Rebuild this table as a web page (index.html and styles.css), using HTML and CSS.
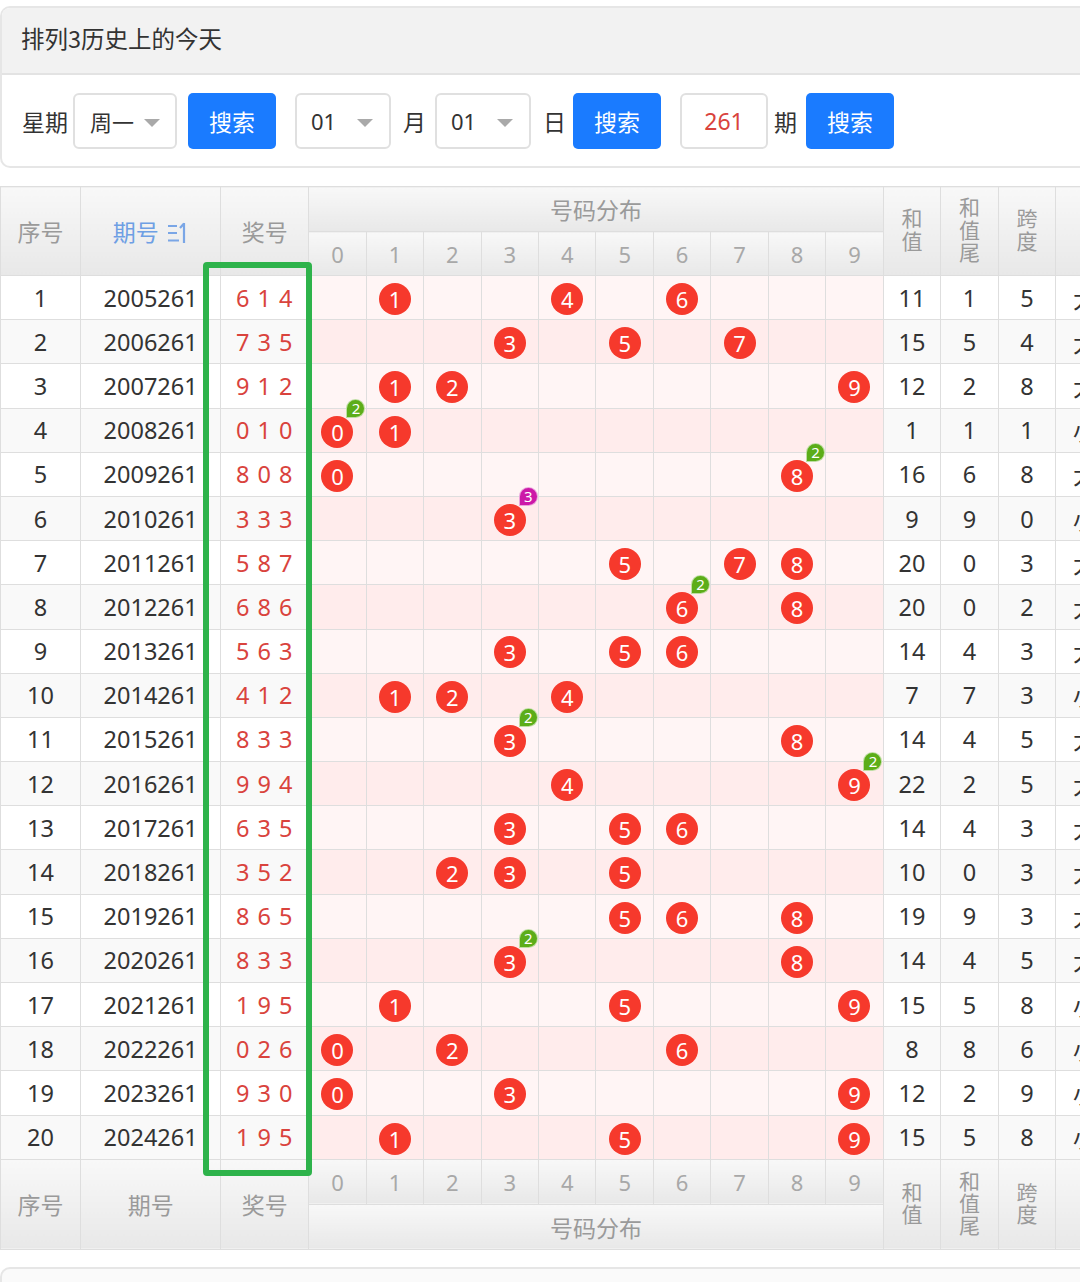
FILE: index.html
```html
<!DOCTYPE html>
<html lang="zh">
<head>
<meta charset="utf-8">
<title>排列3历史上的今天</title>
<link rel="stylesheet" href="styles.css">
</head>
<body>
<div class="page">
  <div class="card">
    <div class="card-head">排列3历史上的今天</div>
    <div class="card-body">
      <span class="lbl">星期</span>
      <div class="sel sel-wk">周一<i class="caret"></i></div>
      <button class="btn b1">搜索</button>
      <div class="sel sel-d s2">01<i class="caret"></i></div>
      <span class="lbl l-m">月</span>
      <div class="sel sel-d">01<i class="caret"></i></div>
      <span class="lbl l-d">日</span>
      <button class="btn b2">搜索</button>
      <div class="inp">261</div>
      <span class="lbl l-q">期</span>
      <button class="btn b3">搜索</button>
    </div>
  </div>

  <table class="grid">
    <colgroup>
      <col class="c-seq"><col class="c-iss"><col class="c-win">
      <col class="c-d"><col class="c-d"><col class="c-d"><col class="c-d"><col class="c-d">
      <col class="c-d"><col class="c-d"><col class="c-d"><col class="c-d"><col class="c-d">
      <col class="c-s"><col class="c-s"><col class="c-s"><col class="c-s">
    </colgroup>
    <thead>
      <tr class="h1">
        <th rowspan="2">序号</th>
        <th rowspan="2" class="sort">期号 <svg class="sort-ic" viewBox="0 0 22 24" width="22" height="24"><path d="M1 5H10M1 12H10M1 19.5H12M17 2V22M17 2.5L13 7" fill="none" stroke="#7aa6e6" stroke-width="2.2"/></svg></th>
        <th rowspan="2">奖号</th>
        <th colspan="10">号码分布</th>
        <th rowspan="2"><span class="vt">和值</span></th>
        <th rowspan="2"><span class="vt">和值尾</span></th>
        <th rowspan="2"><span class="vt">跨度</span></th>
        <th rowspan="2"></th>
      </tr>
      <tr class="h2">
        <th>0</th><th>1</th><th>2</th><th>3</th><th>4</th><th>5</th><th>6</th><th>7</th><th>8</th><th>9</th>
      </tr>
    </thead>
    <tbody>
      <tr><td>1</td><td>2005261</td><td class="win">6 1 4</td><td></td><td><i class="ball">1</i></td><td></td><td></td><td><i class="ball">4</i></td><td></td><td><i class="ball">6</i></td><td></td><td></td><td></td><td>11</td><td>1</td><td>5</td><td>大</td></tr>
      <tr><td>2</td><td>2006261</td><td class="win">7 3 5</td><td></td><td></td><td></td><td><i class="ball">3</i></td><td></td><td><i class="ball">5</i></td><td></td><td><i class="ball">7</i></td><td></td><td></td><td>15</td><td>5</td><td>4</td><td>大</td></tr>
      <tr><td>3</td><td>2007261</td><td class="win">9 1 2</td><td></td><td><i class="ball">1</i></td><td><i class="ball">2</i></td><td></td><td></td><td></td><td></td><td></td><td></td><td><i class="ball">9</i></td><td>12</td><td>2</td><td>8</td><td>大</td></tr>
      <tr><td>4</td><td>2008261</td><td class="win">0 1 0</td><td><i class="ball">0<b class="rep">2</b></i></td><td><i class="ball">1</i></td><td></td><td></td><td></td><td></td><td></td><td></td><td></td><td></td><td>1</td><td>1</td><td>1</td><td>小</td></tr>
      <tr><td>5</td><td>2009261</td><td class="win">8 0 8</td><td><i class="ball">0</i></td><td></td><td></td><td></td><td></td><td></td><td></td><td></td><td><i class="ball">8<b class="rep">2</b></i></td><td></td><td>16</td><td>6</td><td>8</td><td>大</td></tr>
      <tr><td>6</td><td>2010261</td><td class="win">3 3 3</td><td></td><td></td><td></td><td><i class="ball">3<b class="rep r3">3</b></i></td><td></td><td></td><td></td><td></td><td></td><td></td><td>9</td><td>9</td><td>0</td><td>小</td></tr>
      <tr><td>7</td><td>2011261</td><td class="win">5 8 7</td><td></td><td></td><td></td><td></td><td></td><td><i class="ball">5</i></td><td></td><td><i class="ball">7</i></td><td><i class="ball">8</i></td><td></td><td>20</td><td>0</td><td>3</td><td>大</td></tr>
      <tr><td>8</td><td>2012261</td><td class="win">6 8 6</td><td></td><td></td><td></td><td></td><td></td><td></td><td><i class="ball">6<b class="rep">2</b></i></td><td></td><td><i class="ball">8</i></td><td></td><td>20</td><td>0</td><td>2</td><td>大</td></tr>
      <tr><td>9</td><td>2013261</td><td class="win">5 6 3</td><td></td><td></td><td></td><td><i class="ball">3</i></td><td></td><td><i class="ball">5</i></td><td><i class="ball">6</i></td><td></td><td></td><td></td><td>14</td><td>4</td><td>3</td><td>大</td></tr>
      <tr><td>10</td><td>2014261</td><td class="win">4 1 2</td><td></td><td><i class="ball">1</i></td><td><i class="ball">2</i></td><td></td><td><i class="ball">4</i></td><td></td><td></td><td></td><td></td><td></td><td>7</td><td>7</td><td>3</td><td>小</td></tr>
      <tr><td>11</td><td>2015261</td><td class="win">8 3 3</td><td></td><td></td><td></td><td><i class="ball">3<b class="rep">2</b></i></td><td></td><td></td><td></td><td></td><td><i class="ball">8</i></td><td></td><td>14</td><td>4</td><td>5</td><td>大</td></tr>
      <tr><td>12</td><td>2016261</td><td class="win">9 9 4</td><td></td><td></td><td></td><td></td><td><i class="ball">4</i></td><td></td><td></td><td></td><td></td><td><i class="ball">9<b class="rep">2</b></i></td><td>22</td><td>2</td><td>5</td><td>大</td></tr>
      <tr><td>13</td><td>2017261</td><td class="win">6 3 5</td><td></td><td></td><td></td><td><i class="ball">3</i></td><td></td><td><i class="ball">5</i></td><td><i class="ball">6</i></td><td></td><td></td><td></td><td>14</td><td>4</td><td>3</td><td>大</td></tr>
      <tr><td>14</td><td>2018261</td><td class="win">3 5 2</td><td></td><td></td><td><i class="ball">2</i></td><td><i class="ball">3</i></td><td></td><td><i class="ball">5</i></td><td></td><td></td><td></td><td></td><td>10</td><td>0</td><td>3</td><td>大</td></tr>
      <tr><td>15</td><td>2019261</td><td class="win">8 6 5</td><td></td><td></td><td></td><td></td><td></td><td><i class="ball">5</i></td><td><i class="ball">6</i></td><td></td><td><i class="ball">8</i></td><td></td><td>19</td><td>9</td><td>3</td><td>大</td></tr>
      <tr><td>16</td><td>2020261</td><td class="win">8 3 3</td><td></td><td></td><td></td><td><i class="ball">3<b class="rep">2</b></i></td><td></td><td></td><td></td><td></td><td><i class="ball">8</i></td><td></td><td>14</td><td>4</td><td>5</td><td>大</td></tr>
      <tr><td>17</td><td>2021261</td><td class="win">1 9 5</td><td></td><td><i class="ball">1</i></td><td></td><td></td><td></td><td><i class="ball">5</i></td><td></td><td></td><td></td><td><i class="ball">9</i></td><td>15</td><td>5</td><td>8</td><td>小</td></tr>
      <tr><td>18</td><td>2022261</td><td class="win">0 2 6</td><td><i class="ball">0</i></td><td></td><td><i class="ball">2</i></td><td></td><td></td><td></td><td><i class="ball">6</i></td><td></td><td></td><td></td><td>8</td><td>8</td><td>6</td><td>小</td></tr>
      <tr><td>19</td><td>2023261</td><td class="win">9 3 0</td><td><i class="ball">0</i></td><td></td><td></td><td><i class="ball">3</i></td><td></td><td></td><td></td><td></td><td></td><td><i class="ball">9</i></td><td>12</td><td>2</td><td>9</td><td>小</td></tr>
      <tr><td>20</td><td>2024261</td><td class="win">1 9 5</td><td></td><td><i class="ball">1</i></td><td></td><td></td><td></td><td><i class="ball">5</i></td><td></td><td></td><td></td><td><i class="ball">9</i></td><td>15</td><td>5</td><td>8</td><td>小</td></tr>
    </tbody>
    <tfoot>
      <tr class="f1">
        <th rowspan="2">序号</th>
        <th rowspan="2">期号</th>
        <th rowspan="2">奖号</th>
        <th>0</th><th>1</th><th>2</th><th>3</th><th>4</th><th>5</th><th>6</th><th>7</th><th>8</th><th>9</th>
        <th rowspan="2"><span class="vt">和值</span></th>
        <th rowspan="2"><span class="vt">和值尾</span></th>
        <th rowspan="2"><span class="vt">跨度</span></th>
        <th rowspan="2"></th>
      </tr>
      <tr class="f2">
        <th colspan="10">号码分布</th>
      </tr>
    </tfoot>
  </table>

  <div class="next-card"></div>

  <div class="frame"></div>
</div>
</body>
</html>
```

FILE: styles.css
```css
html, body {
  margin: 0;
  padding: 0;
  overflow: hidden;
  background: #fff;
}
body {
  font-family: "Noto Sans", "Noto Sans CJK SC", sans-serif;
  color: #333;
}
.page {
  position: relative;
  width: 1120px;
  padding-top: 6px;
}

/* top card */
.card {
  border: 2px solid #e6e6e6;
  border-right: none;
  border-radius: 10px 0 0 10px;
  overflow: hidden;
}
.card-head {
  box-sizing: border-box;
  height: 67px;
  padding: 0 0 5px 19px;
  background: #f2f2f2;
  border-bottom: 2px solid #e3e3e3;
  display: flex;
  align-items: center;
  font-family: "Noto Sans CJK SC", sans-serif;
  font-size: 23.5px;
  color: #333;
}
.card-body {
  display: flex;
  align-items: center;
  padding: 18px 0 17px 20px;
}
.lbl {
  font-family: "Noto Sans CJK SC", sans-serif;
  font-size: 23px;
  color: #333;
}
.sel {
  position: relative;
  box-sizing: border-box;
  height: 56px;
  border: 2px solid #e0e0e0;
  border-radius: 6px;
  display: flex;
  align-items: center;
  font-family: "Noto Sans", "Noto Sans CJK SC", sans-serif;
  font-size: 22px;
  color: #333;
  background: #fff;
}
.sel-wk {
  width: 104px;
  margin-left: 5px;
  padding-left: 15px;
}
.sel-d {
  width: 96px;
  padding-left: 14px;
}
.s2 { margin-left: 19px; }
.caret {
  position: absolute;
  right: 15px;
  top: 24px;
  width: 0;
  height: 0;
  border-left: 8px solid transparent;
  border-right: 8px solid transparent;
  border-top: 8px solid #a9a9a9;
}
.sel-d .caret { right: 16px; }
.btn {
  box-sizing: border-box;
  height: 56px;
  width: 88px;
  border: none;
  border-radius: 5px;
  background: #1a7bff;
  color: #fff;
  font-family: "Noto Sans CJK SC", sans-serif;
  font-size: 23px;
  padding: 0;
}
.b1 { margin-left: 11px; }
.l-m { margin-left: 12px; margin-right: 9px; }
.l-d { margin-left: 12px; margin-right: 7px; }
.inp {
  box-sizing: border-box;
  width: 88px;
  height: 56px;
  margin-left: 19px;
  border: 2px solid #e0e0e0;
  border-radius: 6px;
  display: flex;
  align-items: center;
  justify-content: center;
  color: #d9433d;
  font-size: 23px;
}
.l-q { margin-left: 6px; margin-right: 9px; }

/* table */
.grid {
  margin-top: 18px;
  border-collapse: collapse;
  table-layout: fixed;
  width: 1114px;
}
.c-seq { width: 80px; }
.c-iss { width: 140px; }
.c-win { width: 88px; }
.c-d { width: 57.4px; }
.c-s { width: 57.5px; }
.grid th, .grid td {
  border: 1px solid #dedede;
  padding: 0;
  text-align: center;
  vertical-align: middle;
  white-space: nowrap;
}
.grid th {
  background: linear-gradient(#f8f8f8, #e8e8e8);
  color: #9a9a9a;
  font-weight: normal;
  font-family: "Noto Sans", "Noto Sans CJK SC", sans-serif;
  font-size: 23px;
}
.grid thead .h1 th { height: 44px; }
.grid thead .h2 th { height: 43px; font-size: 22px; color: #a8a8a8; }
.grid tfoot .f1 th { height: 44px; }
.grid tfoot .f2 th { height: 44px; }
.grid tfoot .f1 th { font-size: 22px; color: #a8a8a8; }
.grid tfoot .f1 th[rowspan] { font-size: 23px; color: #9a9a9a; }
.grid .sort { color: #6e9fe4; }
.sort-ic { vertical-align: -4px; margin-left: 2px; }
.grid th .vt {
  display: inline-block;
  width: 1em;
  white-space: normal;
  line-height: 1.05;
  font-size: 21px;
  font-family: "Noto Sans CJK SC", sans-serif;
}
.grid td {
  height: 43.2px;
  font-size: 23.5px;
  color: #333;
  background: #fff;
}
.grid tbody tr:nth-child(even) td { background: #f9f9f9; }
.grid tbody td:nth-child(n+4):nth-child(-n+13) { background: #fff5f5; }
.grid tbody tr:nth-child(even) td:nth-child(n+4):nth-child(-n+13) { background: #ffecec; }
.grid td.win {
  color: #d9433d;
  letter-spacing: 1px;
}
.ball {
  position: relative;
  display: inline-flex;
  align-items: center;
  justify-content: center;
  width: 32px;
  height: 32px;
  border-radius: 50%;
  background: #f6392c;
  color: #fff;
  font-style: normal;
  font-size: 22px;
  line-height: 1;
  letter-spacing: 0;
  vertical-align: middle;
}
.rep {
  position: absolute;
  left: 25px;
  top: -17px;
  width: 19px;
  height: 19px;
  box-sizing: border-box;
  border: 1px solid rgba(255,255,255,0.6);
  border-radius: 50% 50% 50% 0;
  background: #5cad19;
  color: #fff;
  font-weight: normal;
  font-size: 15px;
  line-height: 17px;
  text-align: center;
}
.rep.r3 { background: #cc18a8; }

.next-card {
  margin-top: 17px;
  height: 40px;
  border: 2px solid #e6e6e6;
  border-right: none;
  border-radius: 10px 0 0 0;
  background: #fafafa;
}

/* annotation frame */
.frame {
  position: absolute;
  left: 203px;
  top: 262px;
  width: 109px;
  height: 914px;
  box-sizing: border-box;
  border: 6px solid #2eb34b;
  border-radius: 4px;
}
```
